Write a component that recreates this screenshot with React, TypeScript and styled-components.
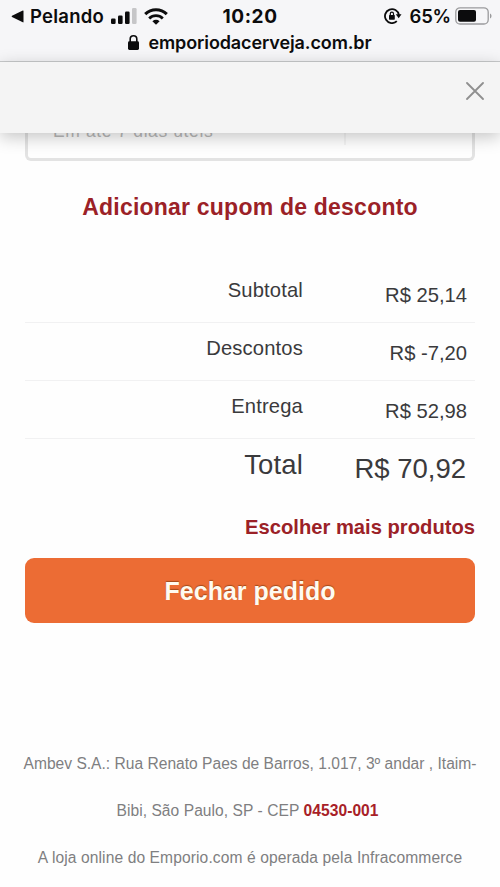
import React from 'react';
import styled, { createGlobalStyle } from 'styled-components';

const GlobalStyle = createGlobalStyle`
  *, *::before, *::after { box-sizing: border-box; }
  body { margin: 0; background: #fefefe; }
  svg { display: block; flex: none; }
`;

const Screen = styled.div`
  width: 500px;
  height: 887px;
  overflow: hidden;
  background: #fefefe;
  color: #3a3a3c;
  font-family: 'Liberation Sans', Arial, sans-serif;
`;

const BrowserBar = styled.header`
  height: 62px;
  background: #f6f6f8;
  border-bottom: 1px solid #c9cbcc;
  color: #0c0c0d;
  font-family: Inter, sans-serif;
`;

const StatusRow = styled.div`
  display: grid;
  grid-template-columns: 1fr auto 1fr;
  align-items: center;
  height: 32px;
  padding: 0 8px 0 11px;
`;

const StatusLeft = styled.div`
  display: flex;
  align-items: center;
`;

const StatusRight = styled(StatusLeft)`
  justify-content: flex-end;
`;

const BackApp = styled.span`
  margin: 0 7px 0 6px;
  font-size: 18.5px;
  font-weight: 600;
  line-height: 24px;
  letter-spacing: 0.25px;
`;

const Signal = styled.div`
  margin-right: 7px;
  padding-bottom: 1px;
`;

const Clock = styled.time`
  margin-right: 3px;
  padding-top: 2px;
  font-size: 19px;
  font-weight: 700;
  line-height: 24px;
  letter-spacing: 0.6px;
`;

const BatteryLevel = styled.span`
  margin: 0 4px 0 8px;
  font-size: 18.5px;
  font-weight: 600;
  line-height: 24px;
  letter-spacing: -0.2px;
`;

const AddressRow = styled.div`
  display: flex;
  justify-content: center;
  align-items: center;
  gap: 9px;
  height: 21px;
`;

const Address = styled.span`
  font-size: 18px;
  font-weight: 600;
  line-height: 21px;
  letter-spacing: -0.11px;
`;

const SiteBar = styled.div`
  position: relative;
  z-index: 1;
  display: flex;
  justify-content: flex-end;
  height: 71px;
  padding: 20px 16px 0 0;
  background: #f4f4f4;
  box-shadow: 0 4px 16px rgba(0, 0, 0, 0.23);
`;

const CloseButton = styled.button`
  width: 18px;
  height: 18px;
  padding: 0;
  border: 0;
  background: none;
`;

const Checkout = styled.main`
  padding: 0 25px;
`;

const DeliveryBox = styled.div`
  display: grid;
  grid-template-columns: 318px 1fr;
  height: 44px;
  margin-top: -16px;
  border: 3px solid #e3e3e3;
  border-top: 0;
  border-radius: 0 0 6px 6px;
`;

const DeliveryTerm = styled.div`
  height: 28px;
  padding-left: 25px;
  border-right: 2px solid #f4f4f4;
  color: #b9b9b9;
  font-size: 17.5px;
  line-height: 29px;
  letter-spacing: 0.6px;
`;

const CouponLink = styled.a`
  display: block;
  margin-top: 32px;
  color: #9b2127;
  font-size: 23px;
  font-weight: 700;
  line-height: 28px;
  letter-spacing: 0.22px;
  text-align: center;
  white-space: nowrap;
`;

const Totals = styled.dl`
  margin: 44px 0 0;
`;

const TotalsRow = styled.div<{ $grand?: boolean }>`
  display: grid;
  grid-template-columns: 278px 1fr;
  height: ${({ $grand }) => ($grand ? '64px' : '58px')};
  padding: ${({ $grand }) => ($grand ? '10px 9px 0 0' : '13px 8px 0 0')};
  border-bottom: ${({ $grand }) => ($grand ? '0' : '1px solid #f1f1f2')};
  font-size: ${({ $grand }) => ($grand ? '27.5px' : '20.2px')};
  line-height: ${({ $grand }) => ($grand ? '32px' : '24px')};
  text-align: right;
  white-space: nowrap;
`;

const Label = styled.dt`
  letter-spacing: 0.15px;
`;

const Amount = styled.dd<{ $grand?: boolean }>`
  margin: 0;
  padding-top: ${({ $grand }) => ($grand ? '4px' : '5px')};
`;

const MoreProducts = styled.a`
  display: block;
  margin-top: 12px;
  color: #9b2127;
  font-size: 20.2px;
  font-weight: 700;
  line-height: 24px;
  text-align: right;
  white-space: nowrap;
`;

const SubmitButton = styled.button`
  display: block;
  width: 450px;
  height: 65px;
  margin-top: 19px;
  padding: 0;
  border: 0;
  border-radius: 9px;
  background: #ec6c34;
  color: #fffaf0;
  font: 700 25px/28px 'Liberation Sans', Arial, sans-serif;
  text-shadow: 0 -1px 1px rgba(90, 40, 0, 0.5);
`;

const Footer = styled.footer`
  margin-top: 118px;
  color: #7f7f81;
  font-size: 15.6px;
  line-height: 46.8px;
  text-align: center;
  white-space: nowrap;
`;

const FooterLine = styled.div<{ $spacing?: number; $trailing?: number }>`
  padding-right: ${({ $trailing = 0 }) => $trailing}px;
  letter-spacing: ${({ $spacing = 0 }) => $spacing}px;
`;

const PostalCode = styled.strong`
  color: #a81f28;
`;

const rows = [
  { label: 'Subtotal', amount: 'R$ 25,14' },
  { label: 'Descontos', amount: 'R$ -7,20' },
  { label: 'Entrega', amount: 'R$ 52,98' },
  { label: 'Total', amount: 'R$ 70,92', grand: true },
];

const BackIcon = () => (
  <svg width="13" height="13" viewBox="0 0 13 13">
    <path d="M1 5.8 11.8.5q.7-.3.7.5v10.8q0 .8-.7.5L1 7.1q-.8-.6 0-1.3Z" fill="currentColor" />
  </svg>
);

const SignalIcon = () => (
  <svg width="26" height="16" viewBox="0 0 26 16" fill="currentColor">
    <rect x="0" y="10.5" width="4.6" height="5.5" rx="1.2" />
    <rect x="7" y="7.5" width="4.6" height="8.5" rx="1.2" />
    <rect x="14" y="3.5" width="4.6" height="12.5" rx="1.2" />
    <rect x="21" y="0" width="4.6" height="16" rx="1.2" fill="#c6c6c8" />
  </svg>
);

const WifiIcon = () => (
  <svg width="24" height="17" viewBox="0 0 24 17" fill="none" stroke="currentColor" strokeWidth="3">
    <path d="M1.2 6.1C7.2.2 16.8.2 22.8 6.1" />
    <path d="M5.2 10.4C9 6.7 15 6.7 18.8 10.4" strokeWidth="2.8" />
    <path d="M8.4 13.2C10.5 11.4 13.5 11.4 15.6 13.2L12 16.8Z" fill="currentColor" stroke="none" />
  </svg>
);

const RotationLockIcon = () => (
  <svg width="18" height="16" viewBox="0 0 18 16" fill="none" stroke="currentColor">
    <path d="M14.9 7A7 7 0 1 0 12.8 13.2" strokeWidth="1.8" />
    <path d="M11.8 6.2h5.7l-2.8 4Z" fill="currentColor" stroke="none" />
    <rect x="5" y="7" width="5.8" height="4.7" rx=".6" fill="currentColor" stroke="none" />
    <path d="M6.3 7.2V5.7a1.6 1.6 0 0 1 3.2 0v1.5" strokeWidth="1.2" />
  </svg>
);

const BatteryIcon = () => (
  <svg width="37" height="18" viewBox="0 0 37 18">
    <rect x=".8" y=".8" width="32.4" height="16.2" rx="4.3" fill="none" stroke="#9b9b9d" strokeWidth="1.3" />
    <rect x="3" y="3" width="18" height="11.8" rx="2" fill="currentColor" />
    <path d="M35 6.4c2 .7 2 4.3 0 5Z" fill="#9b9b9d" />
  </svg>
);

const LockIcon = () => (
  <svg width="11" height="16" viewBox="0 0 11 16">
    <rect x="0" y="6.2" width="11" height="8.8" rx="1.4" fill="currentColor" />
    <path d="M2.2 7V4.1a3.3 3.3 0 0 1 6.6 0V7" fill="none" stroke="currentColor" strokeWidth="1.6" />
  </svg>
);

const CloseIcon = () => (
  <svg width="18" height="18" viewBox="0 0 18 18">
    <path d="M1 1 17 17M17 1 1 17" stroke="#8f8f8f" strokeWidth="1.8" strokeLinecap="round" />
  </svg>
);

export default function App() {
  return (
    <Screen>
      <GlobalStyle />
      <BrowserBar>
        <StatusRow>
          <StatusLeft>
            <BackIcon />
            <BackApp>Pelando</BackApp>
            <Signal><SignalIcon /></Signal>
            <WifiIcon />
          </StatusLeft>
          <Clock>10:20</Clock>
          <StatusRight>
            <RotationLockIcon />
            <BatteryLevel>65%</BatteryLevel>
            <BatteryIcon />
          </StatusRight>
        </StatusRow>
        <AddressRow>
          <LockIcon />
          <Address>emporiodacerveja.com.br</Address>
        </AddressRow>
      </BrowserBar>
      <SiteBar>
        <CloseButton aria-label="Fechar"><CloseIcon /></CloseButton>
      </SiteBar>
      <Checkout>
        <DeliveryBox>
          <DeliveryTerm>Em até 7 dias úteis</DeliveryTerm>
        </DeliveryBox>
        <CouponLink>Adicionar cupom de desconto</CouponLink>
        <Totals>
          {rows.map((row) => (
            <TotalsRow key={row.label} $grand={row.grand}>
              <Label>{row.label}</Label>
              <Amount $grand={row.grand}>{row.amount}</Amount>
            </TotalsRow>
          ))}
        </Totals>
        <MoreProducts>Escolher mais produtos</MoreProducts>
        <SubmitButton>Fechar pedido</SubmitButton>
      </Checkout>
      <Footer>
        <FooterLine>Ambev S.A.: Rua Renato Paes de Barros, 1.017, 3º andar , Itaim-</FooterLine>
        <FooterLine $spacing={0.05} $trailing={5}>Bibi, São Paulo, SP - CEP <PostalCode>04530-001</PostalCode></FooterLine>
        <FooterLine $spacing={0.1}>A loja online do Emporio.com é operada pela Infracommerce</FooterLine>
      </Footer>
    </Screen>
  );
}
